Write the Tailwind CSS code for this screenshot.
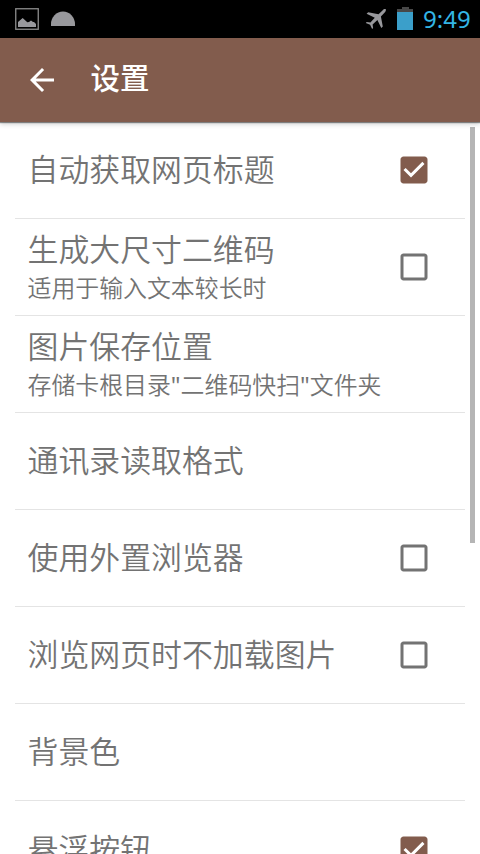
<!DOCTYPE html>
<html lang="zh-CN">
<head>
<meta charset="utf-8">
<title>设置</title>
<script src="https://cdn.jsdelivr.net/npm/@tailwindcss/browser@4"></script>
</head>
<body class="w-[480px] h-[854px] overflow-hidden bg-white font-['Noto_Sans_CJK_SC',sans-serif] text-[#737373]">
<svg class="hidden">
  <symbol id="off" viewBox="0 0 24 24"><path d="M19 5v14H5V5h14m0-2H5c-1.1 0-2 .9-2 2v14c0 1.1.9 2 2 2h14c1.1 0 2-.9 2-2V5c0-1.1-.9-2-2-2z" fill="#737373"/></symbol>
  <symbol id="on" viewBox="0 0 24 24"><path d="M19 3H5c-1.1 0-2 .9-2 2v14c0 1.1.9 2 2 2h14c1.1 0 2-.9 2-2V5c0-1.1-.9-2-2-2zm-9 14l-5-5 1.41-1.41L10 14.17l7.59-7.59L19 8l-9 9z" fill="#825c4d"/></symbol>
</svg>
<div class="relative flex flex-col w-[480px] h-[854px] overflow-hidden">
  <div class="h-[38px] shrink-0 bg-black flex items-center justify-between pl-[15px] pr-[10px]">
    <div class="flex items-center gap-[12px]">
      <svg class="w-[24px] h-[22px]" viewBox="0 0 24 22"><rect x=".75" y=".75" width="22.5" height="20.5" fill="none" stroke="#8c8c8c" stroke-width="1.3"/><path d="M3 19v-5l4.700-4 4.600 4.300 1.700-.3 2-1.400 2 1.400h1l2 2v3z" fill="#98989c"/></svg>
      <svg class="w-[24px] h-[22px]" viewBox="0 0 24 22"><path d="M0 18v-2a12 12.500 0 0 1 24 0v2z" fill="#98989c"/></svg>
    </div>
    <div class="flex items-center h-[38px]">
      <svg class="w-[22px] h-[22px] mr-[10px]" viewBox="0 0 22 22"><path d="M20.800 1.200c-1-.4-2.300.2-3.300 1.200l-4 3.800L3.200 4.200 1.600 5.700l8.200 4-4.400 4.900-3.700-.7L.8 14.900l4.300 1.800 2 4.200 1-.9-.5-3.600 4.800-4.400 3.900 8 1.500-1.500-1.900-10 3.800-4c1-1 1.500-2.400 1.100-3.300z" fill="#98989c"/></svg>
      <svg class="w-[16px] h-[24px] mr-[10px]" viewBox="0 0 16 24"><path d="M5 0h7v2h4v4H0V2h5z" fill="#484848"/><path d="M0 5h16v18H0z" fill="#3b9fca"/></svg>
      <span class="font-['Noto_Sans'] text-[24px] leading-[40px] text-[#33b5e5] w-[47px] whitespace-nowrap">9:49</span>
    </div>
  </div>
  <header class="relative z-10 h-[84px] shrink-0 bg-[#825c4d] flex items-center pl-[24px] shadow-[0_1px_1px_rgba(0,0,0,0.42),0_2px_5px_rgba(0,0,0,0.2)]">
    <svg class="w-[36px] h-[36px]" viewBox="0 0 24 24"><path d="M20 11H7.830l5.590-5.590L12 4l-8 8 8 8 1.410-1.410L7.830 13H20v-2z" fill="#fff"/></svg>
    <h1 class="ml-[30.500px] text-[29.500px] leading-[44px] font-medium text-white -mt-[8px]">设置</h1>
  </header>
  <main class="flex flex-col mx-[15px] text-[30.900px] font-[350]">
    <div class="h-[97px] shrink-0 flex items-center justify-between pl-[12.500px] pr-[33px] border-b border-[#e4e4e4]"><span class="leading-[40px] pb-[4px]">自动获取网页标题</span><svg class="w-[36px] h-[36px]"><use href="#on"/></svg></div>
    <div class="h-[97px] shrink-0 flex items-center justify-between pl-[12.500px] pr-[33px] border-b border-[#e4e4e4]"><div><p class="leading-[39px]">生成大尺寸二维码</p><p class="text-[23.900px] leading-[39px]">适用于输入文本较长时</p></div><svg class="w-[36px] h-[36px]"><use href="#off"/></svg></div>
    <div class="h-[97px] shrink-0 flex items-center pl-[12.500px] border-b border-[#e4e4e4]"><div><p class="leading-[39px]">图片保存位置</p><p class="text-[23.900px] leading-[39px]">存储卡根目录<span class="font-['Noto_Sans'] font-normal">"</span>二维码快扫<span class="font-['Noto_Sans'] font-normal">"</span>文件夹</p></div></div>
    <div class="h-[97px] shrink-0 flex items-center pl-[12.500px] border-b border-[#e4e4e4]"><span class="leading-[40px] pb-[4px]">通讯录读取格式</span></div>
    <div class="h-[97px] shrink-0 flex items-center justify-between pl-[12.500px] pr-[33px] border-b border-[#e4e4e4]"><span class="leading-[40px] pb-[4px]">使用外置浏览器</span><svg class="w-[36px] h-[36px]"><use href="#off"/></svg></div>
    <div class="h-[97px] shrink-0 flex items-center justify-between pl-[12.500px] pr-[33px] border-b border-[#e4e4e4]"><span class="leading-[40px] pb-[4px]">浏览网页时不加载图片</span><svg class="w-[36px] h-[36px]"><use href="#off"/></svg></div>
    <div class="h-[97px] shrink-0 flex items-center pl-[12.500px] border-b border-[#e4e4e4]"><span class="leading-[40px] pb-[4px]">背景色</span></div>
    <div class="h-[97px] shrink-0 flex items-center justify-between pl-[12.500px] pr-[33px]"><span class="leading-[40px] pb-[4px]">悬浮按钮</span><svg class="w-[36px] h-[36px]"><use href="#on"/></svg></div>
  </main>
  <div class="absolute left-[470px] top-[127px] w-[5px] h-[416px] bg-[#b5b5b5]"></div>
</div>
</body>
</html>
